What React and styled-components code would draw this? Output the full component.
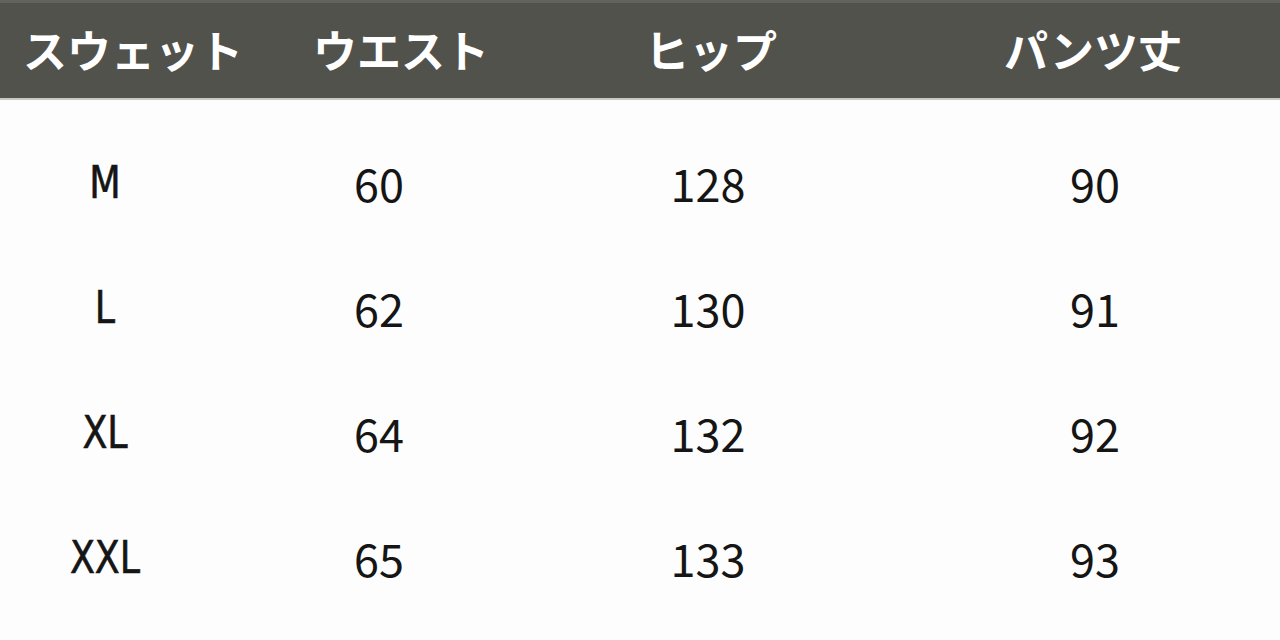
import React from 'react'
import styled, { createGlobalStyle } from 'styled-components'

const GlobalStyle = createGlobalStyle`
  html, body { margin: 0; padding: 0; background: #fdfdfd; }
  body { font-family: "Noto Sans CJK JP", "Noto Sans", sans-serif; }
`

const Table = styled.div`
  width: 1280px;
  height: 640px;
  overflow: hidden;
  background: #fdfdfd;
`

const HeadRow = styled.div`
  display: grid;
  grid-template-columns: 210px 338px 320px 412px;
  height: 100px;
  align-items: center;
  background: #52524d;
  border-top: 3px solid #62625e;
  border-bottom: 2px solid #c9c9c4;
  box-sizing: border-box;
`

const HeadCell = styled.div`
  display: flex;
  justify-content: center;
  color: #ffffff;
  font-size: 44px;
  font-weight: 700;
  line-height: 1;
  white-space: nowrap;
  padding-left: ${p => p.shift}px;
  padding-bottom: 4px;
`

const Body = styled.div`
  padding-top: 20px;
`

const Row = styled.div`
  display: grid;
  grid-template-columns: 210px 338px 320px 412px;
  height: 125px;
  align-items: center;
`

const SizeCell = styled.div`
  text-align: center;
  color: #151515;
  font-family: "DejaVu Sans", sans-serif;
  font-stretch: condensed;
  font-size: 44px;
  line-height: 1;
  transform: scaleX(0.92);
  -webkit-text-stroke: 0.6px #151515;
`

const NumCell = styled.div`
  text-align: center;
  color: #151515;
  font-size: 45px;
  line-height: 1;
  padding-left: ${p => p.shift || 0}px;
`

const headers = [
  { label: 'スウェット', shift: 56 },
  { label: 'ウエスト', shift: 44 },
  { label: 'ヒップ', shift: 6 },
  { label: 'パンツ丈', shift: 38 },
]

const rows = [
  ['M', '60', '128', '90'],
  ['L', '62', '130', '91'],
  ['XL', '64', '132', '92'],
  ['XXL', '65', '133', '93'],
]

export default function App() {
  return (
    <>
      <GlobalStyle />
      <Table>
        <HeadRow>
          {headers.map(h => (
            <HeadCell key={h.label} shift={h.shift}>{h.label}</HeadCell>
          ))}
        </HeadRow>
        <Body>
          {rows.map(r => (
            <Row key={r[0]}>
              <SizeCell>{r[0]}</SizeCell>
              <NumCell>{r[1]}</NumCell>
              <NumCell>{r[2]}</NumCell>
              <NumCell shift={42}>{r[3]}</NumCell>
            </Row>
          ))}
        </Body>
      </Table>
    </>
  )
}
